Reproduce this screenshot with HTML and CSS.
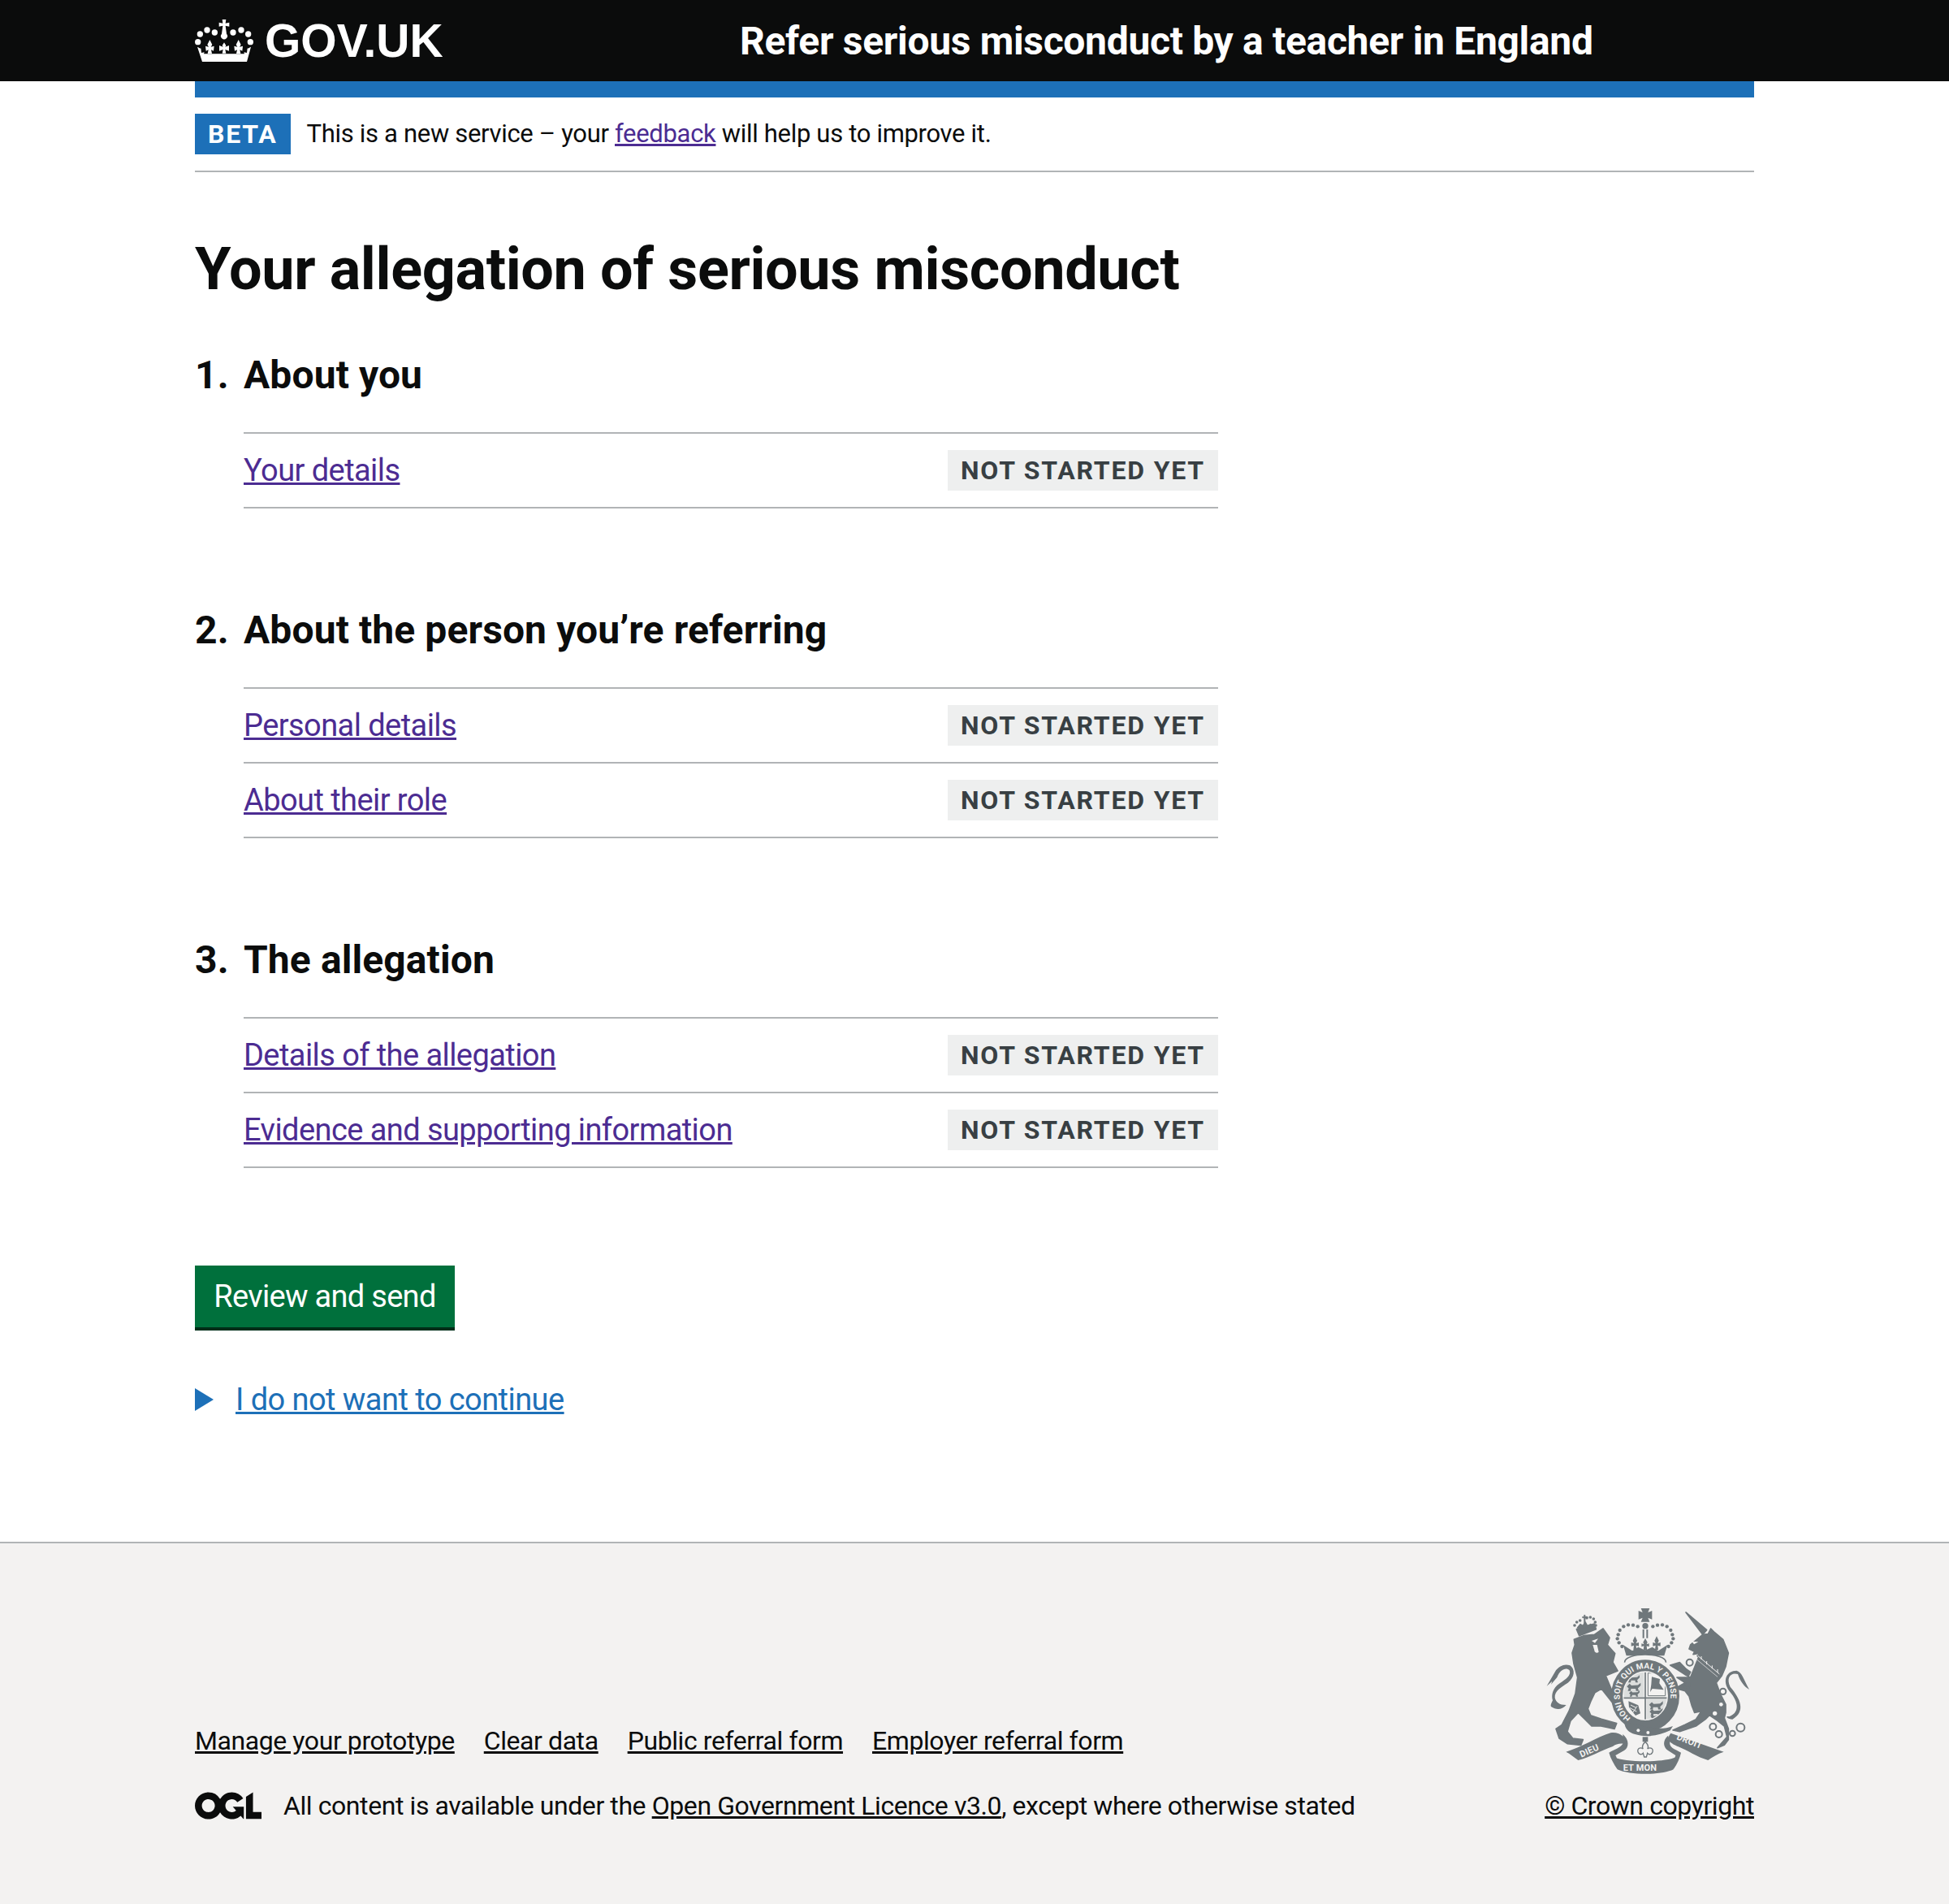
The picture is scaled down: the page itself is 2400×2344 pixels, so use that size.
FILE: index.html
```html
<!DOCTYPE html>
<html lang="en">
<head>
    <meta charset="UTF-8">
    <meta name="viewport" content="width=device-width, initial-scale=1.0">
    <title>Your allegation of serious misconduct</title>
    <link rel="stylesheet" href="styles.css">
</head>
<body>
    <!-- Header -->
    <header class="header">
        <div class="header-inner">
            <a class="logo" href="#">
                <svg class="crown" viewBox="120 65 216 156" aria-hidden="true">
                    <g fill="#fff">
                        <circle cx="139" cy="119" r="11"/><circle cx="165" cy="104" r="11"/><circle cx="193" cy="113" r="11"/>
                        <circle cx="261" cy="113" r="11"/><circle cx="291" cy="104" r="11"/><circle cx="317" cy="119" r="11"/>
                        <circle cx="131" cy="148" r="11"/><circle cx="325" cy="148" r="11"/>
                        <path d="M221 65h14l-2 14 14-3v15l-14-3 4 30a12 12 0 1 1-18 0l4-30-14 3V76l14 3z"/>
                        <path d="M228 150l7 11-3 5 14-5v20l-14-5 3 14h-14l3-14-14 5v-20l14 5-3-5z"/>
                        <path d="M175 140l9 18-5 8 12-3-2 18-9-4 3 14h-16l3-14-9 4-2-18 12 3-5-8z"/>
                        <path d="M281 140l9 18-5 8 12-3-2 18-9-4 3 14h-16l3-14-9 4-2-18 12 3-5-8z"/>
                        <path d="M129 166C138 170 142 174 142 171l2 17 11-2-2 6h150l-2-6 11 2 2-17c0 3 4-1 13-5l-15 55h-165z"/>
                    </g>
                </svg>
                <span class="logo-text">GOV.UK</span>
            </a>
            <a class="service-name" href="#">Refer serious misconduct by a teacher in England</a>
        </div>
    </header>

    <div class="width-container">
        <div class="blue-bar"></div>

        <div class="phase-banner">
            <strong class="tag tag-beta">Beta</strong>
            <span>This is a new service – your <a href="#">feedback</a> will help us to improve it.</span>
        </div>

        <main class="main">
            <h1>Your allegation of serious misconduct</h1>

            <ol class="task-list">
                <li class="section">
                    <h2><span class="section-number">1.</span>About you</h2>
                    <ul class="items">
                        <li class="item"><a href="#">Your details</a><strong class="tag">Not started yet</strong></li>
                    </ul>
                </li>
                <li class="section">
                    <h2><span class="section-number">2.</span>About the person you’re referring</h2>
                    <ul class="items">
                        <li class="item"><a href="#">Personal details</a><strong class="tag">Not started yet</strong></li>
                        <li class="item"><a href="#">About their role</a><strong class="tag">Not started yet</strong></li>
                    </ul>
                </li>
                <li class="section">
                    <h2><span class="section-number">3.</span>The allegation</h2>
                    <ul class="items">
                        <li class="item"><a href="#">Details of the allegation</a><strong class="tag">Not started yet</strong></li>
                        <li class="item"><a href="#">Evidence and supporting information</a><strong class="tag">Not started yet</strong></li>
                    </ul>
                </li>
            </ol>

            <button class="button">Review and send</button>

            <div class="details"><span class="details-arrow"></span><a href="#">I do not want to continue</a></div>
        </main>
    </div>

    <!-- Footer -->
    <footer class="footer">
        <div class="footer-inner">
            <div class="footer-meta">
                <ul class="footer-links">
                    <li><a href="#">Manage your prototype</a></li>
                    <li><a href="#">Clear data</a></li>
                    <li><a href="#">Public referral form</a></li>
                    <li><a href="#">Employer referral form</a></li>
                </ul>
                <div class="licence">
                    <svg class="ogl" viewBox="0 0 483.2 195.7" aria-hidden="true">
                        <path fill="#0b0c0c" d="M421.5 142.8V.1l-50.7 32.3v161.1h112.4v-50.7zm-122.3-9.6A47.12 47.12 0 0 1 221 97.8c0-26 21.1-47.1 47.1-47.1 16.7 0 31.4 8.7 39.7 21.8l42.7-27.2A97.63 97.63 0 0 0 268.1 0c-36.5 0-68.3 20.1-85.1 49.7A98 98 0 0 0 97.8 0C43.9 0 0 43.9 0 97.8s43.9 97.8 97.8 97.8c36.5 0 68.3-20.1 85.1-49.7a97.76 97.76 0 0 0 149.6 25.4l19.4 22.2h3v-87.8h-80l24.3 27.5zM97.8 145c-26 0-47.1-21.1-47.1-47.1s21.1-47.1 47.1-47.1 47.2 21 47.2 47S123.8 145 97.8 145"/>
                    </svg>
                    <span>All content is available under the <a href="#">Open Government Licence v3.0</a>, except where otherwise stated</span>
                </div>
            </div>
            <div class="footer-crest">
                <svg class="crest" viewBox="0 0 765 630" aria-hidden="true">
                    <defs>
                        <path id="passant" d="M0 8L6 2 10 6 24 5 30 0 30 6 24 12 26 18 20 18 19 13 9 13 8 18 2 18 4 12z"/>
                        <clipPath id="shield-clip"><ellipse cx="378" cy="338" rx="80" ry="87"/></clipPath>
                    </defs>
                    <g fill="#6f777b" stroke="#6f777b" stroke-width="5" stroke-linejoin="round">
                        <!-- lion -->
                        <path d="M115 130L150 116 190 112 222 90 246 124 238 150 266 182 258 214 276 246 232 264 255 320 286 346 270 372 254 360 216 312 192 326 176 360 166 386 176 410 216 424 272 440 264 460 240 455 214 450 180 450 150 420 130 400 102 430 90 470 110 495 148 500 140 520 90 515 60 495 48 460 70 445 96 395 120 330 128 270 114 220 108 180 118 150z"/>
                        <!-- lion crown -->
                        <path d="M124 92L190 72 196 92 134 116z"/>
                        <circle cx="117" cy="78" r="3"/><circle cx="125" cy="66" r="3"/><circle cx="137" cy="60" r="3"/><circle cx="162" cy="50" r="3"/><circle cx="175" cy="48" r="3"/><circle cx="187" cy="54" r="3"/><circle cx="193" cy="66" r="3"/><circle cx="195" cy="78" r="3"/>
                        <path d="M146 46h6v-6h4v6h6v4h-6v20h-4V50h-6z" stroke-width="2"/>
                        <path d="M128 86l10-12 10 6 8-14 8 14 12-6 8 14z"/>
                        <!-- unicorn -->
                        <path d="M528 30L605 95 590 112z"/>
                        <path d="M590 112L545 150 540 165 560 175 555 185 585 180 570 190 575 195 545 270 525 260 495 240 470 225 505 215 530 240 545 250 535 270 495 270 525 290 490 310 525 320 540 340 550 375 560 400 585 395 565 425 525 445 480 465 505 470 565 450 600 425 615 410 645 430 670 450 680 490 645 530 670 520 685 500 685 460 670 420 675 400 675 370 655 330 640 290 660 265 675 230 685 180 665 130 635 105 620 90 610 110z"/>
                    </g>
                    <g fill="#6f777b">
                        <!-- tails -->
                        <path d="M30 378C50 392 70 390 86 372 60 372 48 362 44 345 42 318 70 305 92 290 118 270 120 240 100 226 80 218 60 228 48 244L14 302 34 284 30 296 52 270C64 240 86 232 98 244 106 262 84 278 62 292 36 310 30 335 36 355 30 368 28 372 30 378z"/>
                        <path d="M688 415C735 395 715 350 688 320 660 280 680 245 715 245 735 250 740 275 762 315 745 305 728 285 720 258 695 250 675 270 692 305 730 350 750 395 700 425 680 425 670 410 688 415z"/>
                    </g>
                    <!-- unicorn collar -->
                    <g fill="none" stroke="#f3f2f1">
                        <path d="M572 190L652 258" stroke-width="3"/>
                        <path d="M566 202L645 268" stroke-width="2"/>
                        <path d="M585 204v-12M605 222v-12M625 238v-12M645 252v-12" stroke-width="3"/>
                    </g>
                    <g fill="#f3f2f1">
                        <circle cx="635" cy="403" r="8"/><circle cx="658" cy="370" r="7"/>
                        <path d="M550 137l24 2-16 9z"/>
                        <path d="M180 135l24-8-12 16z"/>
                        <path d="M190 170l-6-20 16 0 6 26a9 9 0 0 1-16-6z"/>
                    </g>
                    <g fill="none" stroke="#6f777b" stroke-width="6">
                        <circle cx="542" cy="215" r="12"/><circle cx="532" cy="298" r="11"/><circle cx="665" cy="322" r="11"/>
                        <circle cx="628" cy="452" r="12"/><circle cx="650" cy="480" r="12"/><circle cx="700" cy="477" r="10"/><circle cx="730" cy="455" r="15"/>
                    </g>
                    <!-- crown -->
                    <g fill="#6f777b">
                        <path d="M368 30l-6-15h32l-6 15 15-6v32l-15-6 6 15h-32l6-15-15 6V24z"/>
                        <circle cx="378" cy="80" r="11"/>
                        <path d="M368 93h6v32h-6zM382 93h6v32h-6z"/>
                        <path d="M296 150L330 172 352 158 378 170 404 158 426 172 460 150 448 190H308z"/>
                        <path d="M340 118l8 16-4 10 10-3v14l-10-3 2 16h-12l2-16-10 3v-14l10 3-4-10zM420 118l8 16-4 10 10-3v14l-10-3 2 16h-12l2-16-10 3v-14l10 3-4-10zM378 126l8 14-3 8 9-3v12l-9-3 2 16h-14l2-16-9 3v-12l9 3-3-8z"/>
                        <circle cx="278" cy="112" r="6.5"/><circle cx="284" cy="96" r="6.5"/><circle cx="298" cy="82" r="6.5"/><circle cx="315" cy="76" r="6.5"/><circle cx="333" cy="77" r="6.5"/><circle cx="350" cy="82" r="6.5"/>
                        <circle cx="275" cy="127" r="6.5"/><circle cx="281" cy="142" r="6.5"/><circle cx="292" cy="156" r="6.5"/>
                        <circle cx="406" cy="82" r="6.5"/><circle cx="423" cy="77" r="6.5"/><circle cx="441" cy="76" r="6.5"/><circle cx="458" cy="82" r="6.5"/><circle cx="472" cy="96" r="6.5"/><circle cx="478" cy="112" r="6.5"/>
                        <circle cx="481" cy="127" r="6.5"/><circle cx="475" cy="142" r="6.5"/><circle cx="464" cy="156" r="6.5"/>
                    </g>
                    <path d="M302 215C300 196 340 186 378 186 416 186 456 196 454 215" fill="#f3f2f1" stroke="#6f777b" stroke-width="5"/>
                    <!-- garter -->
                    <ellipse cx="378" cy="338" rx="105" ry="112" fill="#f3f2f1" stroke="#6f777b" stroke-width="42"/>
                    <path id="garter-path" d="M324 421A94 101 0 1 1 432 421" fill="none"/>
                    <text class="crest-text" font-size="30" fill="#f3f2f1"><textPath href="#garter-path">HONI SOIT QUI MAL Y PENSE</textPath></text>
                    <!-- shield -->
                    <g clip-path="url(#shield-clip)">
                        <path d="M298 250H373V342H298z" fill="#dcdedd"/>
                        <path d="M383 250H458V342H383z" fill="#f3f2f1"/>
                        <path d="M298 350H373V426H298z" fill="#f3f2f1"/>
                        <path d="M383 350H458V426H383z" fill="#dcdedd"/>
                        <g fill="#6f777b">
                            <use href="#passant" transform="translate(312 262) scale(1.5)"/>
                            <use href="#passant" transform="translate(310 290) scale(1.7)"/>
                            <use href="#passant" transform="translate(318 318) scale(1.3)"/>
                            <use href="#passant" transform="translate(392 358) scale(1.7)"/>
                            <use href="#passant" transform="translate(394 384) scale(1.6)"/>
                            <use href="#passant" transform="translate(398 406) scale(1.2)"/>
                            <path d="M402 268l30 8-2 16 16 24-42-4-8 12 4-28z"/>
                            <path d="M316 358l36 15 8 30-18 8-24-30z"/>
                        </g>
                        <path d="M324 372l20 10M320 382l26 14M332 400l16-24" stroke="#f3f2f1" stroke-width="3" fill="none"/>
                        <path d="M388 254H452V338H388z" fill="none" stroke="#6f777b" stroke-width="3"/>
                        <path d="M378 250V430M296 346H464" stroke="#6f777b" stroke-width="5" fill="none"/>
                    </g>
                    <!-- buckle -->
                    <path d="M302 430C298 456 316 474 340 480 390 494 430 484 470 466L480 450C440 466 390 456 355 446 340 446 320 446 312 430z" fill="#6f777b"/>
                    <circle cx="352" cy="466" r="6" fill="#f3f2f1"/><circle cx="388" cy="474" r="6" fill="#f3f2f1"/>
                    <!-- scroll -->
                    <g fill="#6f777b">
                        <path d="M85 545C140 530 200 490 250 475 285 470 310 495 312 520 295 510 270 515 258 525 215 540 175 565 130 576 115 565 100 552 85 545z"/>
                        <path d="M295 480C320 500 318 530 300 540L268 558C276 572 280 590 275 610 262 590 250 570 244 548 262 535 290 530 296 512z"/>
                        <path d="M265 565C300 585 450 585 490 565L482 610C440 632 320 632 275 610z"/>
                        <path d="M472 476L668 545C645 552 625 565 610 576 570 565 535 540 500 526 478 515 450 505 472 476z"/>
                        <path d="M462 485C440 505 445 528 462 540L490 558C484 575 482 590 482 610 496 590 506 568 510 548 486 535 462 528 470 505z"/>
                        <path d="M368 490h20v18h-20z"/>
                    </g>
                    <path d="M378 508c10 10 14 18 8 26 12-8 24 0 18 14-4 8-14 8-18 2l-4 14h-8l-4-14c-4 6-14 6-18-2-6-14 6-22 18-14-6-8-2-16 8-26z" fill="#f3f2f1" stroke="#6f777b" stroke-width="4"/>
                    <g class="crest-text" fill="#f3f2f1" font-size="33">
                        <text transform="translate(142 566) rotate(-24)">DIEU</text>
                        <text x="296" y="615">ET MON</text>
                        <text transform="translate(492 498) rotate(22)">DROIT</text>
                    </g>
                </svg>
                <a href="#">© Crown copyright</a>
            </div>
        </div>
    </footer>
</body>
</html>
```
FILE: styles.css
```css
/* General */
* {
    box-sizing: border-box;
}

body {
    margin: 0;
    font-family: Roboto, sans-serif;
    color: #0b0c0c;
    background: #fff;
}

a {
    color: #4c2c92;
}

ol, ul {
    list-style: none;
    margin: 0;
    padding: 0;
}

.width-container,
.header-inner,
.footer-inner {
    width: 1920px;
    margin: 0 auto;
}

/* Header */
.header {
    height: 100px;
    background: #0b0c0c;
}

.header-inner {
    display: flex;
    align-items: center;
    height: 100px;
}

.logo {
    display: flex;
    align-items: center;
    width: 671px;
    color: #fff;
    text-decoration: none;
}

.crown {
    width: 72px;
    height: 52px;
    margin-right: 14px;
}

.logo-text {
    font-family: "Liberation Sans", sans-serif;
    font-weight: bold;
    font-size: 57px;
    line-height: 100px;
}

.service-name {
    font-size: 48px;
    font-weight: bold;
    letter-spacing: -0.32px;
    color: #fff;
    text-decoration: none;
}

.blue-bar {
    height: 20px;
    background: #1d70b8;
}

/* Phase banner */
.phase-banner {
    display: flex;
    align-items: center;
    gap: 20px;
    padding: 20px 0;
    border-bottom: 2px solid #b1b4b6;
    font-size: 31px;
    line-height: 50px;
    letter-spacing: -0.32px;
}

.tag {
    display: inline-block;
    height: 50px;
    padding: 0 16px;
    font-size: 32px;
    line-height: 50px;
    font-weight: bold;
    letter-spacing: 1.8px;
    text-transform: uppercase;
    color: #383f43;
    background: #eeefef;
}

.tag-beta {
    letter-spacing: 2px;
    color: #fff;
    background: #1d70b8;
}

/* Main */
.main {
    padding-top: 80px;
    padding-bottom: 150px;
}

h1 {
    margin: 0 0 60px;
    font-size: 72px;
    line-height: 80px;
    font-weight: bold;
    letter-spacing: -0.37px;
}

.section {
    margin-bottom: 120px;
    width: 1260px;
}

h2 {
    display: flex;
    margin: 0 0 40px;
    font-size: 48px;
    line-height: 60px;
    font-weight: bold;
    letter-spacing: 0.1px;
}

.section-number {
    width: 60px;
}

.items {
    margin-left: 60px;
    border-top: 2px solid #b1b4b6;
}

.item {
    display: flex;
    justify-content: space-between;
    align-items: center;
    padding: 20px 0;
    border-bottom: 2px solid #b1b4b6;
    font-size: 38px;
    line-height: 50px;
    letter-spacing: -0.57px;
}

.button {
    display: block;
    width: 320px;
    height: 80px;
    margin-bottom: 60px;
    padding: 0 0 4px;
    border: none;
    border-radius: 0;
    box-shadow: inset 0 -4px 0 #002d18;
    font-family: inherit;
    font-size: 38px;
    letter-spacing: -0.7px;
    color: #fff;
    background: #00703c;
}

.details {
    display: flex;
    align-items: center;
    font-size: 38px;
    line-height: 50px;
    letter-spacing: -0.55px;
}

.details a {
    color: #1d70b8;
}

.details-arrow {
    width: 0;
    height: 0;
    margin-right: 27px;
    border-style: solid;
    border-width: 14px 0 14px 23px;
    border-color: transparent transparent transparent #1d70b8;
}

/* Footer */
.footer {
    border-top: 2px solid #b1b4b6;
    background: #f3f2f1;
    padding-top: 74px;
    padding-bottom: 101px;
}

.footer-inner {
    display: flex;
    justify-content: space-between;
    align-items: flex-end;
    font-size: 32px;
    line-height: 40px;
    letter-spacing: -0.42px;
}

.footer a {
    color: #0b0c0c;
}

.footer-links {
    display: flex;
    gap: 36px;
    margin-bottom: 40px;
}

.licence {
    display: flex;
    align-items: center;
    gap: 27px;
}

.ogl {
    width: 82px;
    height: 34px;
}

.footer-crest {
    display: flex;
    flex-direction: column;
    align-items: flex-end;
}

.crest {
    width: 255px;
    height: 210px;
    margin-top: 1px;
    margin-bottom: 18px;
    margin-right: 5px;
}

.crest-text {
    font-family: Roboto, sans-serif;
    font-weight: bold;
    letter-spacing: 0.5px;
}

.tag,
.item .tag {
    letter-spacing: 1.8px;
}
```
